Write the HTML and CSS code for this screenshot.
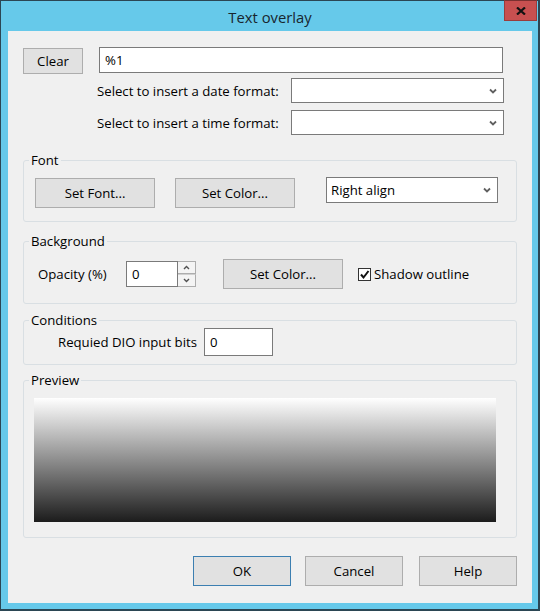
FILE: index.html
```html
<!DOCTYPE html>
<html>
<head>
<meta charset="utf-8">
<title>Text overlay</title>
<link rel="stylesheet" href="styles.css">
</head>
<body>
<div class="window">
  <div class="titlebar">
    <span class="title">Text overlay</span>
    <div class="close">
      <svg width="10" height="8" viewBox="0 0 10 8"><path d="M1 0.5 L9 7.5 M9 0.5 L1 7.5" stroke="#111" stroke-width="2.2" fill="none"/></svg>
    </div>
  </div>
  <div class="client">
    <div class="row row-text">
      <div class="btn btn-clear">Clear</div>
      <div class="textbox tb-main">%1</div>
    </div>
    <div class="row row-sel">
      <span class="lbl">Select to insert a date format:</span>
      <div class="select sel-fmt"><span class="val"></span><svg class="chev" width="8" height="6" viewBox="0 0 8 6"><path d="M1 1.5 L4 4.5 L7 1.5" stroke="#606060" stroke-width="1.8" fill="none"/></svg></div>
    </div>
    <div class="row row-sel row-sel2">
      <span class="lbl">Select to insert a time format:</span>
      <div class="select sel-fmt"><span class="val"></span><svg class="chev" width="8" height="6" viewBox="0 0 8 6"><path d="M1 1.5 L4 4.5 L7 1.5" stroke="#606060" stroke-width="1.8" fill="none"/></svg></div>
    </div>

    <fieldset class="group g-font">
      <legend>Font</legend>
      <div class="gbody gbody-font">
        <div class="btn btn-wide">Set Font...</div>
        <div class="btn btn-wide btn-color1">Set Color...</div>
        <div class="select sel-align"><span class="val">Right align</span><svg class="chev" width="8" height="6" viewBox="0 0 8 6"><path d="M1 1.5 L4 4.5 L7 1.5" stroke="#606060" stroke-width="1.8" fill="none"/></svg></div>
      </div>
    </fieldset>

    <fieldset class="group g-bg">
      <legend>Background</legend>
      <div class="gbody gbody-bg">
        <span class="lbl lbl-op">Opacity (%)</span>
        <div class="spin">
          <div class="textbox tb-op">0</div>
          <div class="spin-btns">
            <div class="spin-btn"><svg width="7" height="5" viewBox="0 0 7 5"><path d="M1 4 L3.5 1.5 L6 4" stroke="#505050" stroke-width="1.4" fill="none"/></svg></div>
            <div class="spin-btn"><svg width="7" height="5" viewBox="0 0 7 5"><path d="M1 1 L3.5 3.5 L6 1" stroke="#505050" stroke-width="1.4" fill="none"/></svg></div>
          </div>
        </div>
        <div class="btn btn-wide btn-color2">Set Color...</div>
        <label class="check">
          <span class="box"><svg width="11" height="11" viewBox="0 0 11 11"><path d="M2 5.5 L4.5 8.5 L9.5 2" stroke="#111" stroke-width="2" fill="none"/></svg></span>
          <span>Shadow outline</span>
        </label>
      </div>
    </fieldset>

    <fieldset class="group g-cond">
      <legend>Conditions</legend>
      <div class="gbody gbody-cond">
        <span class="lbl lbl-dio">Requied DIO input bits</span>
        <div class="textbox tb-dio">0</div>
      </div>
    </fieldset>

    <fieldset class="group g-prev">
      <legend>Preview</legend>
      <div class="gbody gbody-prev">
        <div class="preview"></div>
      </div>
    </fieldset>

    <div class="footer">
      <div class="btn btn-foot btn-default">OK</div>
      <div class="btn btn-foot btn-cancel">Cancel</div>
      <div class="btn btn-foot">Help</div>
    </div>
  </div>
</div>
</body>
</html>
```
FILE: styles.css
```css
* { box-sizing: border-box; }
html, body { margin: 0; padding: 0; }
body {
  width: 540px;
  height: 611px;
  overflow: hidden;
  font-family: "Open Sans", "Noto Sans", sans-serif;
  font-size: 13.2px;
  color: #000;
}
.window {
  width: 540px;
  height: 611px;
  background: #66c9ea;
  border-style: solid;
  border-color: #2b4654;
  border-width: 1px 2px 2px 1px;
  padding: 0 6px 6px 7px;
  display: flex;
  flex-direction: column;
}
.titlebar {
  height: 30px;
  position: relative;
  display: flex;
  align-items: center;
  justify-content: center;
}
.title {
  font-size: 14.8px;
  color: #18262e;
  margin-top: 1px;
}
.close {
  position: absolute;
  right: -5px;
  top: -1px;
  width: 33px;
  height: 21px;
  background: #c75050;
  border: 1px solid #9a3c3c;
  border-top-color: #7a3030;
  display: flex;
  align-items: center;
  justify-content: center;
}
.client {
  flex: 1;
  background: #f0f0f0;
  padding: 16px 15px 0 15px;
  display: flex;
  flex-direction: column;
}
.row { display: flex; }
.btn {
  background: #e1e1e1;
  border: 1px solid #adadad;
  display: flex;
  align-items: center;
  justify-content: center;
  color: #000;
}
.textbox {
  background: #fff;
  border: 1px solid #7a7a7a;
  display: flex;
  align-items: center;
  padding-left: 5px;
}
.row-text { align-items: flex-start; }
.btn-clear { width: 60px; height: 26px; margin-top: 1px; }
.tb-main { width: 404px; height: 26px; margin-left: 16px; }
.row-sel { margin-top: 4px; align-items: center; padding-left: 74px; padding-right: 13px; }
.row-sel2 { margin-top: 7px; }
.select {
  background: #fff;
  border: 1px solid #7a7a7a;
  display: flex;
  align-items: center;
  justify-content: space-between;
  padding: 0 6px 0 4px;
}
.sel-fmt { width: 213px; height: 25px; margin-left: auto; }
.chev { display: block; }

.group {
  margin: 0;
  padding: 0;
  border: 1px solid #d9dfe3;
  border-radius: 3px;
  min-width: 0;
}
.group legend {
  padding: 0 2px;
  margin-left: 5px;
  line-height: 16px;
}
.g-font { margin-top: 17px; }
.gbody { display: flex; align-items: center; }
.gbody-font { padding: 10px 11px 13px 11px; align-items: flex-start; }
.btn-wide { width: 120px; height: 30px; }
.btn-color1 { margin-left: 20px; }
.sel-align { width: 172px; height: 26px; margin-left: 31px; margin-top: -1px; }

.g-bg { margin-top: 11px; }
.gbody-bg { padding: 10px 11px 14px 11px; }
.lbl-op { margin-left: 3px; width: 88px; }
.spin { display: flex; }
.tb-op { width: 52px; height: 26px; }
.spin-btns { display: flex; flex-direction: column; width: 18px; height: 26px; }
.spin-btn {
  flex: 1;
  background: #f4f4f4;
  border: 1px solid #adadad;
  border-left: none;
  display: flex;
  align-items: center;
  justify-content: center;
}
.spin-btn + .spin-btn { border-top-color: #d0d0d0; }
.btn-color2 { margin-left: 27px; }
.check { display: flex; align-items: center; margin-left: 15px; }
.box {
  width: 13px;
  height: 13px;
  border: 1px solid #333;
  background: #fff;
  display: flex;
  align-items: center;
  justify-content: center;
  margin-right: 3px;
}

.g-cond { margin-top: 8px; }
.gbody-cond { padding: 0 11px 8px 34px; }
.lbl-dio { width: 146px; }
.tb-dio { width: 69px; height: 28px; }

.g-prev { margin-top: 7px; }
.gbody-prev { padding: 10px 20px 15px 10px; }
.preview {
  width: 462px;
  height: 124px;
  background: linear-gradient(#ffffff, #1c1c1c);
}

.footer {
  margin-top: 18px;
  display: flex;
  justify-content: flex-end;
  gap: 14px;
}
.btn-foot { width: 98px; height: 30px; }
.btn-cancel { margin-right: 2px; }
.btn-default { border-color: #3c7fb1; }
```
